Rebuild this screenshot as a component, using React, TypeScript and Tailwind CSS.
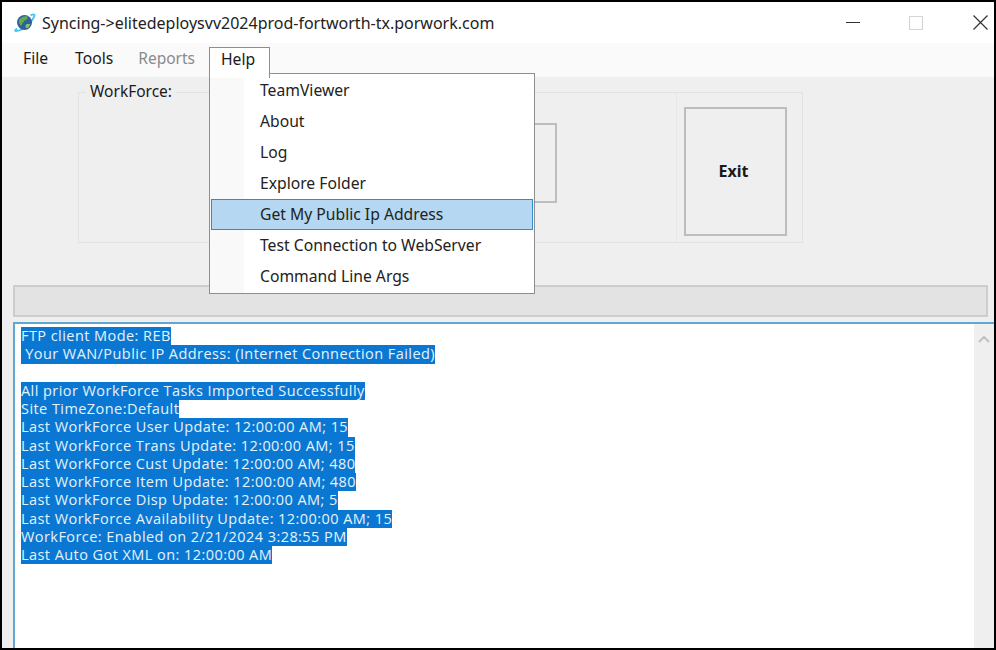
import React from 'react';

const menuItems = [
  'TeamViewer',
  'About',
  'Log',
  'Explore Folder',
  'Get My Public Ip Address',
  'Test Connection to WebServer',
  'Command Line Args',
];

const logLines = [
  'FTP client Mode: REB',
  ' Your WAN/Public IP Address: (Internet Connection Failed)',
  '',
  'All prior WorkForce Tasks Imported Successfully',
  'Site TimeZone:Default',
  'Last WorkForce User Update: 12:00:00 AM; 15',
  'Last WorkForce Trans Update: 12:00:00 AM; 15',
  'Last WorkForce Cust Update: 12:00:00 AM; 480',
  'Last WorkForce Item Update: 12:00:00 AM; 480',
  'Last WorkForce Disp Update: 12:00:00 AM; 5',
  'Last WorkForce Availability Update: 12:00:00 AM; 15',
  'WorkForce: Enabled on 2/21/2024 3:28:55 PM',
  'Last Auto Got XML on: 12:00:00 AM',
];

function AppIcon() {
  return (
    <svg width="22" height="20" viewBox="0 0 22 20" className="shrink-0">
      <path d="M3 15.500c-2 1.500-2.500 2.500-1 2.500 2.500 0 7-2 11-5.500 4-3.500 7-7.500 7.500-10 .2-1.500-1.500-1.500-4 0" fill="none" stroke="#4dc4f0" strokeWidth="1.800" />
      <circle cx="10.500" cy="9.500" r="7.500" fill="#2f5f9c" />
      <path d="M5 7c2-3 5.500-4.500 8.500-3.500 1 1.500-.5 3.500-3 4-.5 1.500-2 2-2.500 4-.4 1.300-1 1.500-1.500.8C5 10.800 4.600 8.500 5 7z" fill="#63ac4c" />
      <path d="M12 11.500c1.500-.8 3.500-.6 4.300-.2-.5 2-2.300 4-4 4-.8-1-1-2.800-.3-3.800z" fill="#84c562" />
    </svg>
  );
}

export default function App() {
  return (
    <div className="relative w-[996px] h-[650px] overflow-hidden bg-black p-[2px] text-[#1a1a1a] font-['Noto_Sans',sans-serif]">
      <div className="flex flex-col h-full bg-[#f0eff0]">
        {/* title bar */}
        <div className="flex items-center h-[41px] bg-white shrink-0 pl-[12px]">
          <AppIcon />
          <span className="ml-[6px] text-[16px] text-[#222]">Syncing-&gt;elitedeploysvv2024prod-fortworth-tx.porwork.com</span>
          <div className="ml-auto flex items-center">
            <div className="w-[14px] h-[1.5px] bg-[#333] mr-[49px]" />
            <div className="w-[14px] h-[14px] border border-[#d4d4d4] mr-[50px]" />
            <svg width="15" height="15" viewBox="0 0 15 15" className="mr-[6px]">
              <path d="M.5.5l14 14M14.500.5l-14 14" stroke="#333" strokeWidth="1.200" />
            </svg>
          </div>
        </div>

        {/* menu bar */}
        <div className="flex items-end h-[34px] bg-[#fbfafb] shrink-0 pl-[21px] text-[15.7px]">
          <span className="h-[30px]">File</span>
          <span className="h-[30px] ml-[27px]">Tools</span>
          <span className="h-[30px] ml-[25px] text-[15.5px] text-[#8a8a8a]">Reports</span>
          <div className="relative z-20 h-[31px] w-[61px] ml-[14px] -mb-[1px] bg-white border border-b-0 border-[#8e8e8e] pl-[11px]">Help</div>
        </div>

        {/* workforce group */}
        <fieldset className="ml-[76px] mt-[5px] w-[725px] h-[161px] flex shrink-0 border border-[#e2e2e2]">
          <legend className="ml-[7px] px-[4px] text-[15.5px] leading-[20px] -translate-y-px">WorkForce:</legend>
          <div className="flex w-full h-[150px] -mt-[9px]">
            <div className="w-[598px] flex items-start justify-end pr-[119px] pt-[30px] border-r border-[#e6e6e6]">
              <div className="w-[120px] h-[80px] border-2 border-[#bdbdbd]" />
            </div>
            <div className="flex-1 pl-[7px] pt-[14px]">
              <div className="w-[103px] h-[129px] border-2 border-[#bdbdbd] flex items-center justify-center pb-[2px] pr-[4px] text-[16px] font-bold">Exit</div>
            </div>
          </div>
        </fieldset>

        {/* progress bar */}
        <div className="ml-[11px] mt-[42px] w-[975px] h-[32px] shrink-0 bg-[#e4e3e4] border-2 border-[#cdcdcd]" />

        {/* log box */}
        <div className="ml-[11px] mt-[5px] flex-1 min-h-0 flex border-l-2 border-t-2 border-[#62a7cf] bg-white">
          <div className="flex-1 pl-[6px] pt-[3px] text-[14.5px] tracking-[0.44px] leading-[18.28px] text-[#e6f2fb] font-['Open_Sans',sans-serif] whitespace-pre">
            {logLines.map((line, i) => (
              <div key={i} className="h-[18.28px]">
                <span className="inline-block bg-[#0a78d2]">{line}</span>
              </div>
            ))}
          </div>
          <div className="w-[20px] bg-[#f0eff0] flex justify-center pt-[11px]">
            <svg width="12" height="8" viewBox="0 0 12 8">
              <path d="M1 7l5-5 5 5" fill="none" stroke="#c0c0c0" strokeWidth="2" />
            </svg>
          </div>
        </div>
      </div>

      {/* Help dropdown */}
      <div className="absolute z-10 left-[209px] top-[73px] w-[326px] h-[221px] border border-[#8e8e8e] bg-white p-[1px] text-[15.7px] text-[#222]">
        <div className="absolute left-0 top-0 bottom-0 w-[34px] bg-[#f9f9f9]" />
        {menuItems.map((item, i) => (
          <div
            key={item}
            className={
              i === 4
                ? 'relative flex items-center h-[31px] pl-[48px] bg-[#b5d7f1] border border-[#2f8ec9]'
                : 'relative flex items-center h-[31px] pl-[49px]'
            }
          >
            {item}
          </div>
        ))}
      </div>
    </div>
  );
}
